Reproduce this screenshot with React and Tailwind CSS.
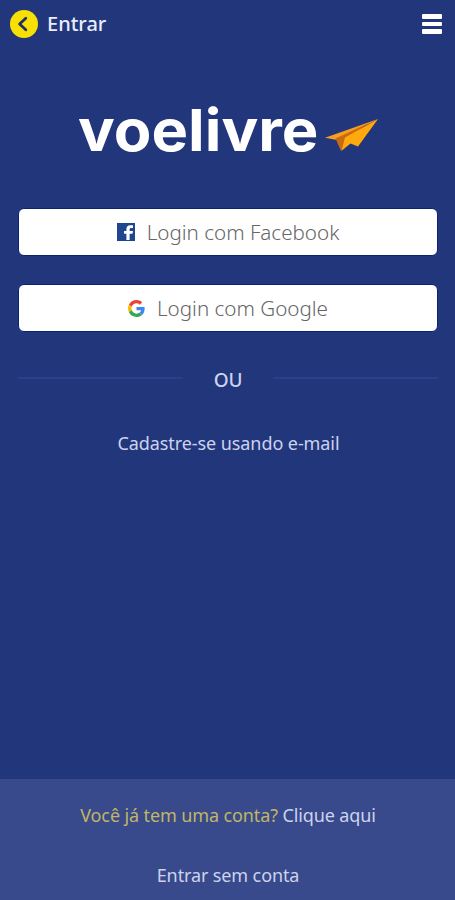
import React from "react";

function PlaneIcon() {
  return (
    <svg className="w-[54px] h-[34px]" viewBox="0 0 54 34" fill="none">
      <path d="M0 18.8 53 0 12 21Z" fill="#f79d20" />
      <path d="M10.5 19.5 44 4 20 21 16 32Z" fill="#c96a12" />
      <path d="M53 0 20 18.5 16.3 32 25.5 24.5 33 27.5Z" fill="#ffa90c" />
    </svg>
  );
}

function FacebookIcon() {
  return (
    <svg className="w-[18px] h-[18px]" viewBox="0 0 18 18">
      <rect width="18" height="18" fill="#20468f" />
      <path
        d="M9.4 17v-6.2H7V8h2.4V6.2C9.4 3.8 10.9 2.3 13.2 2.3H16V5h-1.8c-1.2 0-1.6.6-1.6 1.5V8H16l-.5 2.8h-2.9V17Z"
        fill="#fff"
      />
    </svg>
  );
}

function GoogleIcon() {
  return (
    <svg className="w-[17px] h-[17px]" viewBox="0 0 48 48">
      <path
        fill="#ea4335"
        d="M24 9.5c3.54 0 6.71 1.22 9.21 3.6l6.85-6.85C35.9 2.38 30.47 0 24 0 14.62 0 6.51 5.38 2.56 13.22l7.98 6.19C12.43 13.72 17.74 9.5 24 9.5z"
      />
      <path
        fill="#4285f4"
        d="M46.98 24.55c0-1.57-.15-3.09-.38-4.55H24v9.02h12.94c-.58 2.96-2.26 5.48-4.78 7.18l7.73 6c4.51-4.18 7.09-10.36 7.09-17.65z"
      />
      <path
        fill="#fbbc05"
        d="M10.53 28.59A14.5 14.5 0 0 1 9.77 24c0-1.6.27-3.14.76-4.59l-7.98-6.19A23.9 23.9 0 0 0 0 24c0 3.88.92 7.54 2.56 10.78l7.97-6.19z"
      />
      <path
        fill="#34a853"
        d="M24 48c6.48 0 11.93-2.13 15.89-5.81l-7.73-6c-2.15 1.45-4.92 2.3-8.16 2.3-6.26 0-11.57-4.22-13.47-9.91l-7.98 6.19C6.51 42.62 14.62 48 24 48z"
      />
    </svg>
  );
}

function App() {
  return (
    <div className="w-full h-[900px] bg-[#22367c] flex flex-col font-['Noto_Sans',sans-serif] text-[#ccd3ee]">
      {/* Header */}
      <header className="h-12 shrink-0 pl-[10px] pr-[13px] flex items-center justify-between">
        <div className="flex items-center">
          <button className="w-[28px] h-[28px] rounded-full bg-[#f8df05] flex items-center justify-center">
            <svg className="w-[28px] h-[28px]" viewBox="0 0 28 28" fill="none">
              <path
                d="M15.8 8.2 9.6 14l6.2 5.8"
                stroke="#22305c"
                strokeWidth="2.8"
                strokeLinecap="round"
                strokeLinejoin="round"
              />
            </svg>
          </button>
          <h1 className="ml-[9px] text-[20px] font-medium text-[#e9edfb]">
            Entrar
          </h1>
        </div>
        <button className="flex flex-col gap-[3px]">
          <span className="w-5 h-[4.5px] bg-white rounded-[1px]" />
          <span className="w-5 h-[4.5px] bg-white rounded-[1px]" />
          <span className="w-5 h-[4.5px] bg-white rounded-[1px]" />
        </button>
      </header>

      <main className="flex-1 pl-[18px] pr-[17px] flex flex-col">
        {/* Logo */}
        <div className="h-[160px] pl-[60px] pt-[42px] flex items-start">
          <span className="w-[247px] shrink-0 origin-left scale-x-[1.06] text-[58px] leading-[80px] font-bold text-white font-['Inter',sans-serif]">
            voelivre
          </span>
          <div className="mt-[29px]">
            <PlaneIcon />
          </div>
        </div>

        {/* Social login */}
        <div className="flex flex-col gap-[28px]">
          <button className="h-[48px] rounded-[6px] bg-white border border-[#0b2173] flex items-center justify-center gap-3 text-[20.6px] font-light text-[#666]">
            <FacebookIcon />
            <span>Login com Facebook</span>
          </button>
          <button className="h-[48px] rounded-[6px] bg-white border border-[#0b2173] flex items-center justify-center gap-3 text-[20.6px] font-light text-[#666]">
            <GoogleIcon />
            <span>Login com Google</span>
          </button>
        </div>

        {/* Divider */}
        <div className="mt-[34px] h-[28px] flex items-center">
          <span className="flex-1 h-[2px] mb-[4px] bg-[#2c4087]" />
          <span className="w-[90px] text-center text-[19px] font-medium tracking-[-0.3px]">
            OU
          </span>
          <span className="flex-1 h-[2px] mb-[4px] bg-[#2c4087]" />
        </div>

        <a className="mt-[35px] pl-px text-center text-[18px] leading-[28px] tracking-[-0.08px]">
          Cadastre-se usando e-mail
        </a>
      </main>

      {/* Footer */}
      <footer className="h-[121px] pl-px bg-[#384a8b] flex flex-col items-center text-[18px] leading-[28px] tracking-[-0.12px]">
        <p className="mt-[22px]">
          <span className="text-[#c0b665]">Você já tem uma conta?</span>{" "}
          <a>Clique aqui</a>
        </p>
        <a className="mt-[32px]">Entrar sem conta</a>
      </footer>
    </div>
  );
}

export default App;
